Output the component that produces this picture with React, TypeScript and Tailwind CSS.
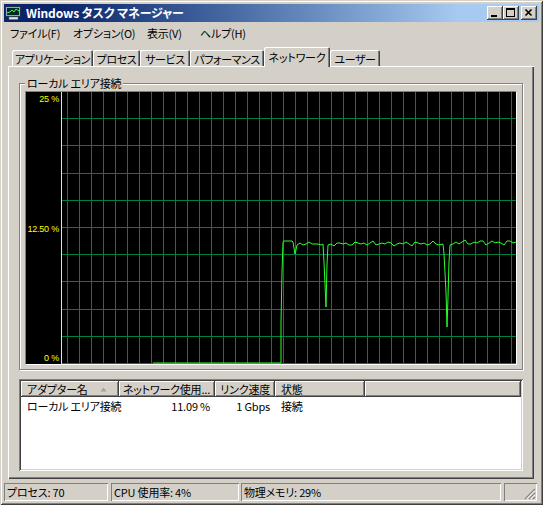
import React from 'react';

const level = (x: number) =>
  152 + Math.round(1.3 * Math.sin(x * 1.37) + 1.1 * Math.sin(x * 0.41 + 1) - 0.4);

const buildLine = () => {
  const pts: number[][] = [
    [127, 271], [255, 271], [255, 230], [256, 180], [257, 150], [258, 149],
    [266, 149], [267, 150], [268, 156], [269, 162], [270, 158], [271, 153],
  ];
  for (let x = 274; x <= 295; x += 3) pts.push([x, level(x)]);
  pts.push([297, 152], [298, 170], [300, 215], [301, 172], [302, 153]);
  for (let x = 305; x <= 415; x += 3) pts.push([x, level(x)]);
  pts.push([417, 152], [418, 162], [420, 200], [421, 235], [422, 205], [423, 170], [424, 153]);
  for (let x = 427; x <= 490; x += 3) pts.push([x, level(x) - 1]);
  return pts.map(p => p.join(',')).join(' ');
};

const LINE = buildLine();

const Graph: React.FC = () => {
  const vLines = Array.from({ length: 38 }, (_, k) => 41 + 12 * k);
  const hLines = Array.from({ length: 10 }, (_, k) => Math.round(27.2 * (k + 1)) - 1);
  return (
    <svg width="490" height="272" className="block bg-black">
      {vLines.map(x => (
        <rect key={x} x={x} y={0} width={1} height={272} fill="#008040" />
      ))}
      {hLines.map(y => (
        <rect key={y} x={35} y={y} width={455} height={1} fill="#008040" />
      ))}
      <rect x={35} y={0} width={1} height={272} fill="#ffff00" />
      <g fill="#ffff00" fontSize="9" fontFamily="'Liberation Sans', sans-serif" textAnchor="end">
        <text x="33" y="10">25 %</text>
        <text x="33" y="140">12.50 %</text>
        <text x="33" y="269">0 %</text>
      </g>
      <polyline points={LINE} fill="none" stroke="#2cff2c" strokeWidth="1" />
    </svg>
  );
};

const AppIcon = () => (
  <svg width="17" height="14" viewBox="0 0 17 14">
    <rect x="0.5" y="0.5" width="15" height="10" fill="#8ca6c8" stroke="#203050" />
    <rect x="2" y="2" width="12" height="7" fill="#002828" />
    <polyline points="2,7 5,6 7,4 9,6 11,3 14,5" fill="none" stroke="#40ff40" strokeWidth="1" />
    <rect x="4" y="11" width="9" height="2.5" fill="#e8e8e8" stroke="#606060" strokeWidth="0.5" />
  </svg>
);

const capBtn = 'w-[16px] h-[14px] bg-[#d4d0c8] flex items-center justify-center shadow-[inset_-1px_-1px_0_#404040,inset_1px_1px_0_#ffffff,inset_-2px_-2px_0_#808080]';

const TitleBar = () => (
  <div className="h-[18px] flex items-center bg-linear-to-r from-[#0a246a] from-10% to-[#a6caf0] to-85% pl-[1px] pr-[2px]">
    <AppIcon />
    <span className="ml-[4px] text-white font-bold text-[12px] tracking-[-0.1px]">Windows タスク マネージャー</span>
    <div className="ml-auto flex items-center">
      <div className={capBtn}>
        <svg width="16" height="14"><rect x="4" y="9" width="6" height="2" fill="#000" /></svg>
      </div>
      <div className={capBtn}>
        <svg width="16" height="14">
          <rect x="3.5" y="2.5" width="8" height="8" fill="none" stroke="#000" />
          <rect x="3" y="2" width="9" height="2" fill="#000" />
        </svg>
      </div>
      <div className={`${capBtn} ml-[2px]`}>
        <svg width="16" height="14">
          <path d="M4.5 3.5 L10.5 9.5 M10.5 3.5 L4.5 9.5" stroke="#000" strokeWidth="1.6" />
        </svg>
      </div>
    </div>
  </div>
);

const Menu = () => (
  <div className="h-[19px] flex items-center pl-[6px] pt-[2px]">
    <span className="w-[63px]">ファイル(F)</span>
    <span className="w-[74px]">オプション(O)</span>
    <span className="w-[53px]">表示(V)</span>
    <span>ヘルプ(H)</span>
  </div>
);

const tabShadow = 'shadow-[inset_1px_1px_0_#ffffff,inset_-1px_0_0_#404040,inset_-2px_0_0_#808080]';

const Tabs = () => {
  const tabs: [string, number, boolean][] = [
    ['アプリケーション', 81, false],
    ['プロセス', 47, false],
    ['サービス', 50, false],
    ['パフォーマンス', 74, false],
    ['ネットワーク', 66, true],
    ['ユーザー', 50, false],
  ];
  return (
    <div className="mt-[6px] h-[20px] -mb-[1px] relative z-10 flex items-start pl-[8px]">
      {tabs.map(([label, w, sel]) => (
        <div
          key={label}
          style={{ width: w }}
          className={
            sel
              ? `h-[20px] bg-[#d4d0c8] rounded-t-[2px] flex items-center justify-center pb-[1px] ${tabShadow}`
              : `h-[16px] mt-[3px] bg-[#d4d0c8] rounded-t-[2px] flex items-center justify-center pt-[1px] tracking-[-0.4px] ${tabShadow}`
          }
        >
          {label}
        </div>
      ))}
    </div>
  );
};

const cols: [string, number, 'l' | 'r'][] = [
  ['アダプター名', 98, 'l'],
  ['ネットワーク使用...', 96, 'r'],
  ['リンク速度', 60, 'r'],
  ['状態', 90, 'l'],
];

const row = ['ローカル エリア接続', '11.09 %', '1 Gbps', '接続'];

const headerCell = 'h-[16px] bg-[#d4d0c8] flex items-center overflow-hidden shadow-[inset_-1px_-1px_0_#404040,inset_1px_1px_0_#ffffff,inset_-2px_-2px_0_#808080]';

const AdapterList = () => (
  <div className="mt-[9px] w-[504px] h-[92px] bg-white p-[2px] shadow-[inset_1px_1px_0_#808080,inset_-1px_-1px_0_#ffffff,inset_2px_2px_0_#404040,inset_-2px_-2px_0_#d4d0c8]">
    <div className="flex">
      {cols.map(([label, w, a], i) => (
        <div
          key={label}
          style={{ width: w }}
          className={`${headerCell} ${a === 'r' ? 'justify-end pr-[5px]' : 'pl-[6px]'}`}
        >
          <span>{label}</span>
          {i === 0 && (
            <svg width="8" height="5" className="ml-[12px]">
              <path d="M0.5 4.5 L3.5 0.5 L6.5 4.5 Z" fill="#a0a0a0" />
            </svg>
          )}
        </div>
      ))}
      <div className={`${headerCell} flex-1`} />
    </div>
    <div className="flex h-[16px] items-center mt-[1px]">
      {cols.map(([label, w, a], i) => (
        <div
          key={label}
          style={{ width: w }}
          className={a === 'r' ? 'text-right pr-[5px]' : 'pl-[6px]'}
        >
          {row[i]}
        </div>
      ))}
    </div>
  </div>
);

const pane = 'h-[18px] flex items-center pl-[3px] shadow-[inset_1px_1px_0_#808080,inset_-1px_-1px_0_#ffffff]';

const StatusBar = () => (
  <div className="h-[22px] flex items-end">
    <div className={`${pane} w-[104px]`}>プロセス: 70</div>
    <div className={`${pane} w-[128px] ml-[3px]`}>CPU 使用率: 4%</div>
    <div className={`${pane} w-[260px] ml-[2px]`}>物理メモリ: 29%</div>
    <div className={`${pane} w-[33px] ml-[3px] relative`}>
      <svg width="12" height="12" className="absolute right-[1px] bottom-[1px]">
        <path d="M11 1 L1 11 M11 5 L5 11 M11 9 L9 11" stroke="#808080" strokeWidth="1.2" />
        <path d="M11 2.5 L2.5 11 M11 6.5 L6.5 11 M11 10.5 L10.5 11" stroke="#ffffff" strokeWidth="1" />
      </svg>
    </div>
  </div>
);

export default function App() {
  return (
    <div className="w-[543px] h-[505px] bg-[#d4d0c8] p-[4px] flex flex-col text-[11px] leading-[12px] whitespace-nowrap tracking-[-0.2px] text-black font-['Noto_Sans_CJK_JP','Noto_Sans_CJK_SC',sans-serif] [font-feature-settings:'palt'] shadow-[inset_1px_1px_0_#d4d0c8,inset_-1px_-1px_0_#404040,inset_2px_2px_0_#ffffff,inset_-2px_-2px_0_#808080] overflow-hidden">
      <TitleBar />
      <Menu />
      <Tabs />
      <div className="ml-[4px] w-[526px] h-[413px] pt-[17px] pl-[11px] shadow-[inset_1px_1px_0_#ffffff,inset_-1px_-1px_0_#404040,inset_-2px_-2px_0_#808080]">
        <div className="relative w-[504px] h-[287px] border border-[#808080] pt-[7px] pl-[5px] shadow-[inset_1px_1px_0_#ffffff,1px_1px_0_#ffffff]">
          <span className="absolute -top-[7px] left-[5px] px-[2px] bg-[#d4d0c8]">ローカル エリア接続</span>
          <div className="w-[492px] h-[274px] border border-t-[#808080] border-l-[#808080] border-r-white border-b-white">
            <Graph />
          </div>
        </div>
        <AdapterList />
      </div>
      <StatusBar />
    </div>
  );
}
